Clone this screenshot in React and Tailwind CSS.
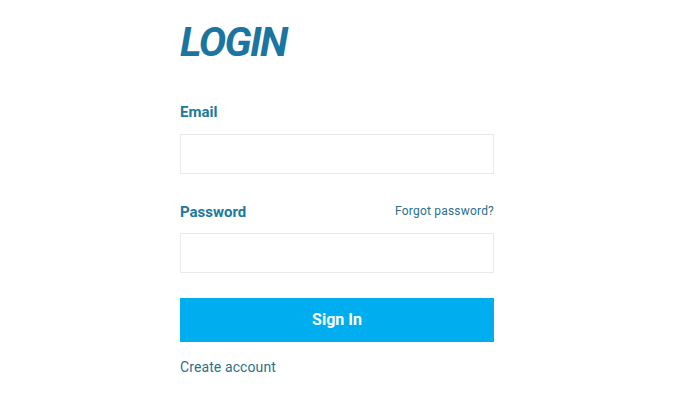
import React from 'react';

const App = () => {
  return (
    <div className="min-h-[415px] w-[680px] bg-white font-['Roboto',sans-serif]">
      <div className="ml-[180px] w-[314px] pt-[20px]">
        <h1 className="text-[41px] leading-[44px] font-bold italic tracking-[-1.6px] text-[#1a76a0]">LOGIN</h1>

        <form className="mt-[39px]" onSubmit={(e) => e.preventDefault()}>
          <label htmlFor="email" className="block text-[15px] leading-[18px] font-bold text-[#20799c]">Email</label>
          <input
            id="email"
            type="email"
            className="mt-[13px] block h-[40px] w-full border border-[#e9e9e9] px-3 outline-none"
          />

          <div className="mt-[29px] flex items-center justify-between">
            <label htmlFor="password" className="block text-[15px] leading-[18px] font-bold text-[#20799c]">Password</label>
            <a href="#" className="-mt-[3px] text-[12px] leading-[18px] tracking-[0.2px] text-[#2c6f8c]">Forgot password?</a>
          </div>
          <input
            id="password"
            type="password"
            className="mt-[12px] block h-[40px] w-full border border-[#e9e9e9] px-3 outline-none"
          />

          <button
            type="submit"
            className="mt-[25px] block h-[44px] w-full bg-[#00adef] text-[16px] font-bold text-white"
          >
            Sign In
          </button>
        </form>

        <a href="#" className="mt-[16px] inline-block text-[14px] leading-[18px] tracking-[0.1px] text-[#2c6f8c]">Create account</a>
      </div>
    </div>
  );
};

export default App;
